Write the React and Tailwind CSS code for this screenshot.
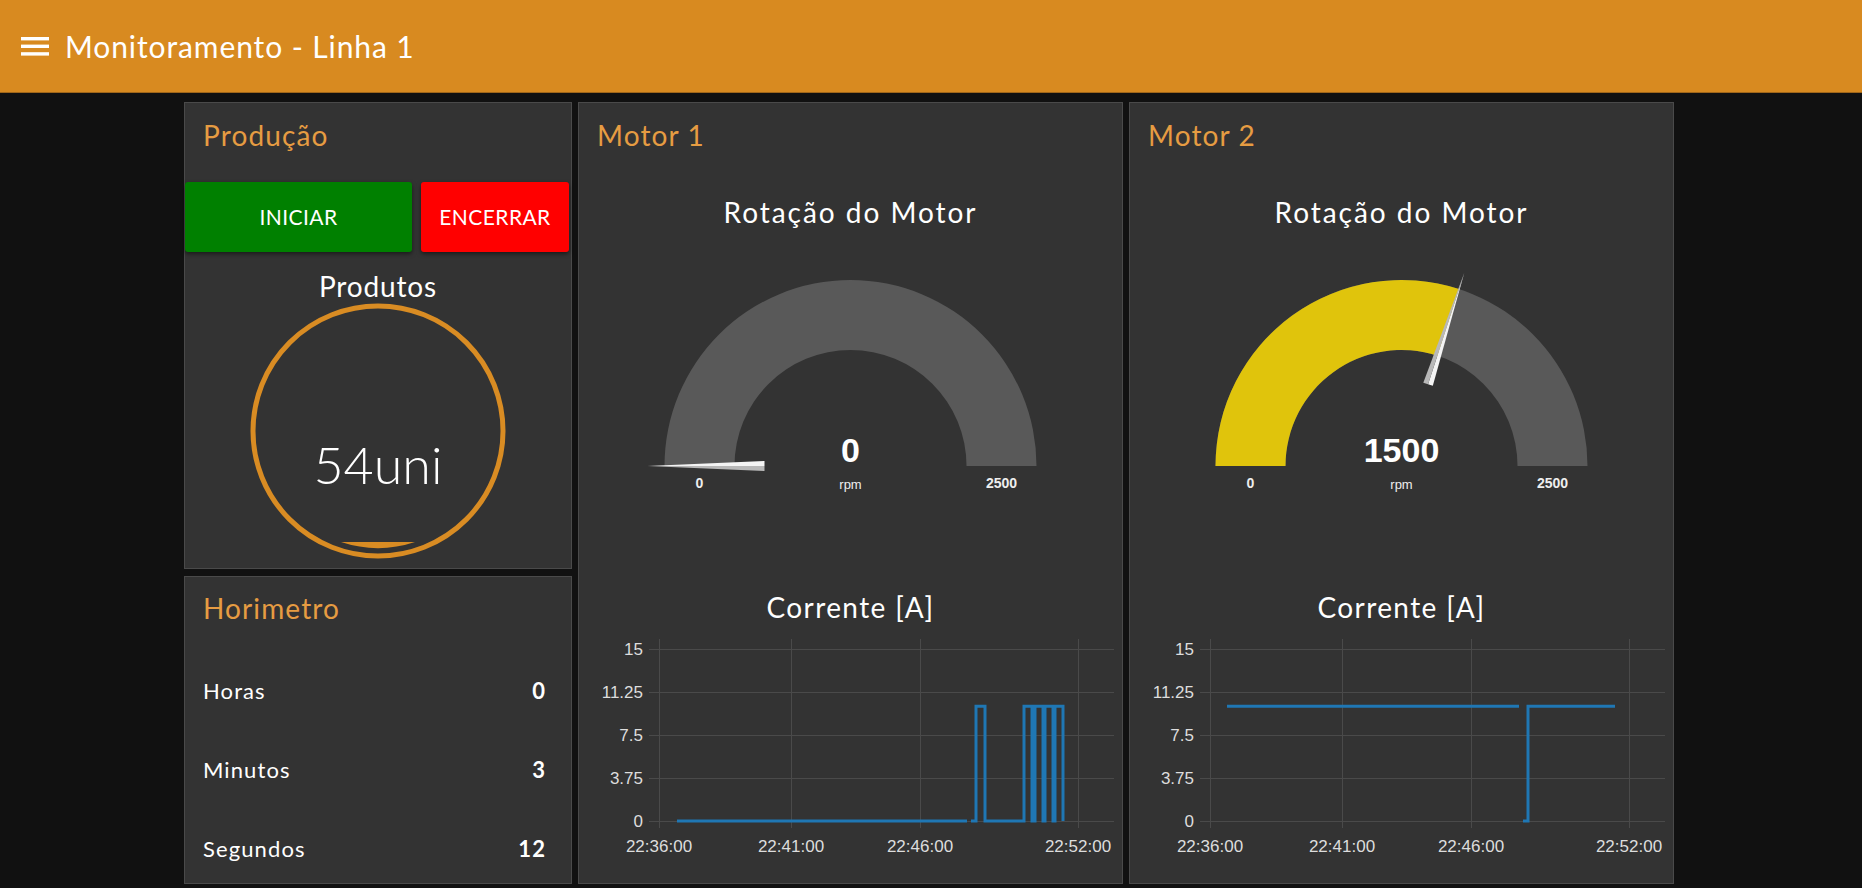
import React from "react";

const ARIAL = "'Liberation Sans', Arial, sans-serif";

function Card({ className, children }) {
  return (
    <div className={"bg-[#333333] border border-[#4a4a4a] " + className}>
      {children}
    </div>
  );
}

function Title({ children }) {
  return (
    <div className="pl-[18px] text-[28px] leading-[32px] tracking-[0.04em] text-[#e69c42]">
      {children}
    </div>
  );
}

function Gauge({ value, max = 2500 }) {
  const cx = 271.5;
  const cy = 238;
  const R = 186;
  const r = 116;
  const frac = value / max;
  const th = Math.PI * (1 - frac);
  const c = Math.cos(th);
  const s = Math.sin(th);
  const band = `M ${cx - R} ${cy} A ${R} ${R} 0 0 1 ${cx + R} ${cy} L ${cx + r} ${cy} A ${r} ${r} 0 0 0 ${cx - r} ${cy} Z`;
  const fill =
    frac > 0
      ? `M ${cx - R} ${cy} A ${R} ${R} 0 0 1 ${cx + R * c} ${cy - R * s} L ${cx + r * c} ${cy - r * s} A ${r} ${r} 0 0 0 ${cx - r} ${cy} Z`
      : null;
  const dx = c;
  const dy = -s;
  const px = s;
  const py = c;
  const bx = cx + 86 * dx;
  const by = cy + 86 * dy;
  const tx = cx + 203 * dx;
  const ty = cy + 203 * dy;
  const up = `${tx},${ty} ${bx + 5 * px},${by + 5 * py} ${bx},${by}`;
  const dn = `${tx},${ty} ${bx},${by} ${bx - 5 * px},${by - 5 * py}`;
  return (
    <svg width="543" height="270" className="block">
      <path d={band} fill="#595959" />
      {fill && <path d={fill} fill="#e0c40c" />}
      <polygon points={up} fill="#f4f4f4" />
      <polygon points={dn} fill="#b8b8b8" />
      <text x={cx} y={234} textAnchor="middle" fill="#ffffff" fontFamily={ARIAL} fontWeight="700" fontSize="34">
        {value}
      </text>
      <text x={cx} y={261} textAnchor="middle" fill="#eeeeee" fontFamily={ARIAL} fontSize="13">
        rpm
      </text>
      <text x={cx - (R + r) / 2} y={260} textAnchor="middle" fill="#eeeeee" fontFamily={ARIAL} fontWeight="700" fontSize="14">
        0
      </text>
      <text x={cx + (R + r) / 2} y={260} textAnchor="middle" fill="#eeeeee" fontFamily={ARIAL} fontWeight="700" fontSize="14">
        {max}
      </text>
    </svg>
  );
}

function Chart({ lines }) {
  const ys = [
    [26, "15"],
    [69, "11.25"],
    [112, "7.5"],
    [155, "3.75"],
    [198, "0"],
  ];
  const xs = [
    [80, "22:36:00"],
    [212, "22:41:00"],
    [341, "22:46:00"],
    [499, "22:52:00"],
  ];
  return (
    <svg width="543" height="255" className="block">
      {ys.map(([y, l]) => (
        <g key={l}>
          <line x1={70} x2={535} y1={y + 0.5} y2={y + 0.5} stroke="#4a4a4a" strokeWidth="1" />
          <text x={64} y={y + 6} textAnchor="end" fill="#dddddd" fontFamily={ARIAL} fontSize="17">
            {l}
          </text>
        </g>
      ))}
      {xs.map(([x, l]) => (
        <g key={l}>
          <line x1={x + 0.5} x2={x + 0.5} y1={16} y2={205} stroke="#4a4a4a" strokeWidth="1" />
          <text x={x} y={229} textAnchor="middle" fill="#dddddd" fontFamily={ARIAL} fontSize="17">
            {l}
          </text>
        </g>
      ))}
      {lines.map((pts, i) => (
        <polyline
          key={i}
          points={pts.map(([x, v]) => `${x},${198 - v * 11.467}`).join(" ")}
          fill="none"
          stroke="#1f77b4"
          strokeWidth="3"
        />
      ))}
    </svg>
  );
}

function MotorCard({ name, value, lines }) {
  return (
    <Card className="w-[545px] h-[782px] flex flex-col">
      <div className="pt-[16px]">
        <Title>{name}</Title>
      </div>
      <div className="mt-[45px] text-center text-white text-[28px] leading-[32px] tracking-[0.07em]">
        Rotação do Motor
      </div>
      <Gauge value={value} />
      <div className="mt-[93px] text-center text-white text-[28px] leading-[32px] tracking-[0.05em]">
        Corrente [A]
      </div>
      <Chart lines={lines} />
    </Card>
  );
}

const motor1Lines = [
  [
    [98, 0],
    [388, 0],
  ],
  [
    [392, 0],
    [397, 0],
    [397, 10],
    [406, 10],
    [406, 0],
    [445, 0],
    [445, 10],
    [453, 10],
    [453, 0],
    [456, 0],
    [456, 10],
    [464, 10],
    [464, 0],
    [466, 0],
    [466, 10],
    [474, 10],
    [474, 0],
    [476, 0],
    [476, 10],
    [484, 10],
    [484, 0],
  ],
];

const motor2Lines = [
  [
    [97, 10],
    [389, 10],
  ],
  [
    [393, 0],
    [398, 0],
    [398, 10],
    [485, 10],
  ],
];

function Row({ label, value }) {
  return (
    <div className="flex justify-between pl-[18px] pr-[25px] text-[22px] leading-[26px] tracking-[0.05em] text-white">
      <span>{label}</span>
      <span className="font-bold">{value}</span>
    </div>
  );
}

export default function App() {
  const lens = "M 156 240 A 117 117 0 0 0 230 240 Z";
  return (
    <div className="min-h-screen w-full bg-[#111111] [font-family:Lato,sans-serif]">
      <header className="h-[93px] bg-[#d88a20] border-b border-[#a0661a] flex items-center pl-[21px] gap-[16px]">
        <svg width="28" height="19" viewBox="0 0 28 19" className="block">
          <rect x="0" y="0" width="28" height="3.4" fill="#ffffff" />
          <rect x="0" y="7.6" width="28" height="3.4" fill="#ffffff" />
          <rect x="0" y="15.2" width="28" height="3.4" fill="#ffffff" />
        </svg>
        <span className="text-white text-[30px] tracking-[0.03em]">Monitoramento - Linha 1</span>
      </header>
      <main className="flex gap-[6px] pl-[184px] pt-[9px]">
        <div className="flex flex-col gap-[7px] w-[388px]">
          <Card className="h-[467px] flex flex-col">
            <div className="pt-[16px]">
              <Title>Produção</Title>
            </div>
            <div className="mt-[31px] flex h-[70px]">
              <button className="w-[227px] h-full bg-[#008000] rounded-[3px] text-white text-[21px] tracking-[0.02em] shadow-[0_2px_4px_rgba(0,0,0,0.5)]">
                INICIAR
              </button>
              <button className="ml-[9px] w-[148px] h-full bg-[#ff0000] rounded-[3px] text-white text-[21px] tracking-[0.02em] shadow-[0_2px_4px_rgba(0,0,0,0.5)]">
                ENCERRAR
              </button>
            </div>
            <div className="mt-[18px] text-center text-white text-[28px] leading-[32px] tracking-[0.03em]">
              Produtos
            </div>
            <svg width="386" height="260" className="block">
              <circle cx="193" cy="129" r="125" fill="none" stroke="#d98c23" strokeWidth="5" />
              <path d={lens} fill="#d98c23" />
              <text
                x="193"
                y="182"
                textAnchor="middle"
                fill="#ffffff"
                fontFamily="Lato, sans-serif"
                fontWeight="300"
                fontSize="52"
              >
                54uni
              </text>
            </svg>
          </Card>
          <Card className="h-[308px] flex flex-col">
            <div className="pt-[15px]">
              <Title>Horimetro</Title>
            </div>
            <div className="mt-[54px] flex flex-col gap-[53px]">
              <Row label="Horas" value="0" />
              <Row label="Minutos" value="3" />
              <Row label="Segundos" value="12" />
            </div>
          </Card>
        </div>
        <MotorCard name="Motor 1" value={0} lines={motor1Lines} />
        <MotorCard name="Motor 2" value={1500} lines={motor2Lines} />
      </main>
    </div>
  );
}
